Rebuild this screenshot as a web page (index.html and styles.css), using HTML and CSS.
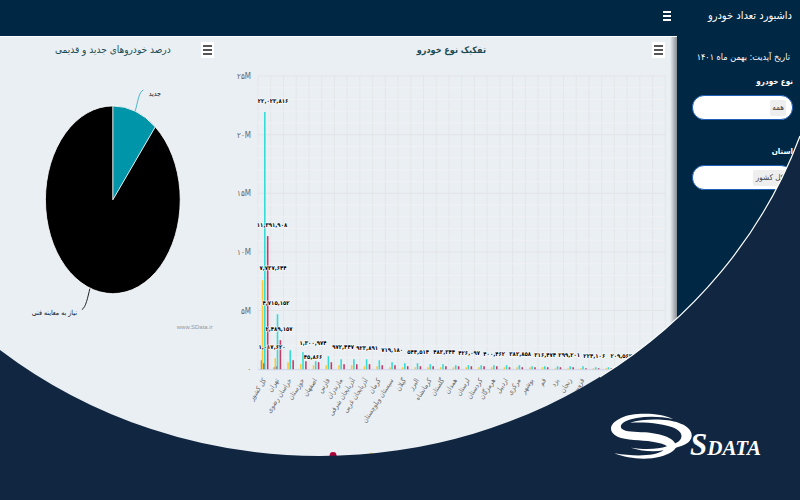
FILE: index.html
```html
<!DOCTYPE html>
<html lang="fa">
<head>
<meta charset="utf-8">
<meta name="viewport" content="width=device-width, initial-scale=1">
<title>داشبورد تعداد خودرو</title>
<link rel="stylesheet" href="styles.css">
</head>
<body>
<div class="page">
  <header class="topbar">
    <button class="nav-toggle" type="button" aria-label="منو">
      <svg viewBox="0 0 8 10" width="8" height="10"><path d="M0 1h8M0 5h8M0 9h8" stroke="#fff" stroke-width="2"/></svg>
    </button>
    <h1 class="brand" dir="rtl">داشبورد تعداد خودرو</h1>
  </header>

  <div class="body">
    <main class="charts">
      <section class="panel">
        <div class="panel-head">
          <h2 class="panel-title" dir="rtl">درصد خودروهای جدید و قدیمی</h2>
          <button class="chart-menu" type="button" aria-label="منوی نمودار">
            <svg viewBox="0 0 9 10" width="9" height="10"><path d="M0 1h9M0 5h9M0 9h9" stroke="#555" stroke-width="2"/></svg>
          </button>
        </div>
        <svg class="chart" viewBox="0 62 226 398" role="img" aria-label="جدید و نیاز به معاینه فنی">
          <ellipse cx="113" cy="200" rx="67.5" ry="94" fill="#000" stroke="#fff" stroke-width=".8"/>
          <path d="M113 200V106A67.5 94 0 0 1 155.5 127Z" fill="#0095a8" stroke="#e8f0f2" stroke-width="1"/>
          <path d="M135.5 111C138 102 139 92 143.500 90" fill="none" stroke="#4bb5c6"/>
          <path d="M90 289C88 297 86 308 82 310" fill="none" stroke="#222"/>
          <text class="slice-label" x="149" y="96">جدید</text>
          <text class="slice-label" x="77" y="315" text-anchor="end">نیاز به معاینه فنی</text>
          <text class="credit" x="213" y="329" text-anchor="end">www.SData.ir</text>
        </svg>
      </section>

      <section class="panel">
        <div class="panel-head">
          <h2 class="panel-title strong" dir="rtl">تفکیک نوع خودرو</h2>
          <button class="chart-menu" type="button" aria-label="منوی نمودار">
            <svg viewBox="0 0 9 10" width="9" height="10"><path d="M0 1h9M0 5h9M0 9h9" stroke="#555" stroke-width="2"/></svg>
          </button>
        </div>
        <svg class="chart" id="bars" viewBox="226 62 451 398" role="img" aria-label="تفکیک نوع خودرو"></svg>
      </section>
    </main>

    <aside class="sidebar" dir="rtl">
      <p class="updated">تاریخ آپدیت: بهمن ماه ۱۴۰۱</p>
      <div class="field">
        <label for="type">نوع خودرو</label>
        <div class="pill"><select id="type"><option>همه</option></select></div>
      </div>
      <div class="field">
        <label for="province">استان</label>
        <div class="pill"><select id="province"><option>کل کشور</option></select></div>
      </div>
    </aside>
  </div>

  <svg class="curve" viewBox="0 0 800 500" preserveAspectRatio="none" aria-hidden="true">
    <path d="M0 500V350A509 479 0 0 0 320 456A509 479 0 0 0 800 136V500Z" fill="#112741"/>
    <path d="M600 377A509 479 0 0 0 800 136" fill="none" stroke="#fff" stroke-width="1.200"/>
  </svg>

  <svg class="logo" viewBox="608 408 160 56" role="img" aria-label="SData">
    <g fill="#fff" transform="translate(605 408) scale(.3333)">
      <path d="M204 33C165 14 85 12 48 30C12 46 8 72 38 86C62 97 108 95 142 101C165 105 182 109 186 115C160 124 120 126 78 119C110 130 148 132 176 127C150 145 90 146 28 136C70 154 130 156 165 146C195 138 208 128 214 117C211 90 172 78 120 73C90 71 62 72 50 62C40 50 60 36 95 30C130 24 170 26 204 33Z"/>
      <path d="M75 44C115 32 185 31 222 45C262 58 272 88 246 106C236 113 224 116 208 121L206 108C236 98 238 74 208 60C178 46 120 41 75 44Z"/>
    </g>
    <text class="logo-text" x="690" y="455">S<tspan class="logo-small">DATA</tspan></text>
  </svg>
</div>
<script src="chart.js"></script>
</body>
</html>
```
FILE: styles.css
```css
* { box-sizing: border-box; }

body {
  margin: 0;
  font-family: "DejaVu Sans Condensed", "DejaVu Sans", sans-serif;
  background: #112741;
}

h1, h2, p { margin: 0; font-weight: 400; }
button { border: 0; padding: 0; cursor: pointer; }
button svg { display: block; }

.page {
  position: relative;
  display: flex;
  flex-direction: column;
  height: 100vh;
  overflow: hidden;
}

.topbar {
  flex: none;
  display: flex;
  align-items: center;
  justify-content: flex-end;
  gap: 37px;
  height: 36px;
  padding: 0 8px 4px;
  background: #002744;
}

.nav-toggle { background: none; }

.brand {
  color: #fff;
  font-size: 11px;
  line-height: 16px;
  white-space: nowrap;
}

.body {
  flex: 1;
  display: grid;
  grid-template-columns: minmax(0, 1fr) 123px;
}

.charts {
  display: grid;
  grid-template-columns: minmax(0, 1fr) minmax(0, 2fr);
  align-items: start;
  border-top: 1px solid #fff;
  background: linear-gradient(to left, #878d92, #eaeff4 7px);
}

.panel-head {
  display: grid;
  grid-template-columns: 1fr auto 1fr;
  align-items: center;
  height: 25px;
  padding: 0 12px;
}

.panel-title {
  grid-column: 2;
  color: #1d4b50;
  font-size: 10px;
  line-height: 16px;
  white-space: nowrap;
}

.panel-title.strong { font-weight: 700; font-size: 9px; }

.chart-menu {
  justify-self: end;
  padding: 3px 2px;
  background: #fff;
}

.chart { display: block; width: 100%; height: auto; }

.slice-label { font-size: 7px; fill: #111; }
.credit { font: 6px "Liberation Sans", sans-serif; fill: #999; }
.axis-label { font-size: 7px; fill: #666; }
.tick-label { font-size: 8px; fill: #666; }
.value-label {
  font-size: 6px;
  font-weight: 700;
  fill: #000;
  stroke: #fff;
  stroke-width: 1px;
  paint-order: stroke;
}

.sidebar {
  padding: 13px 7px 13px 15px;
  background: #002744;
  color: #fff;
}

.updated {
  margin-bottom: 9px;
  padding-right: 3px;
  font-size: 9px;
  line-height: 16px;
  white-space: nowrap;
}

.field { margin-bottom: 24px; }

.field label {
  display: block;
  margin-bottom: 5px;
  font-size: 8px;
  font-weight: 700;
  line-height: 16px;
}

.pill {
  display: flex;
  align-items: center;
  height: 25px;
  padding: 0 6px;
  border: 1px solid #1e5fb8;
  border-radius: 12px;
  background: #fff;
}

.pill select {
  appearance: none;
  height: 16px;
  padding: 0 2px;
  border: 0;
  border-radius: 2px;
  background: #eee;
  color: #444;
  font: 8px "DejaVu Sans Condensed", "DejaVu Sans", sans-serif;
}

.curve {
  position: absolute;
  inset: 0;
  width: 100%;
  height: 100%;
  pointer-events: none;
}

.logo {
  position: absolute;
  right: 32px;
  bottom: 36px;
  width: 160px;
  height: 56px;
}

.logo-text {
  font: italic 700 31px "Liberation Serif", serif;
  fill: #fff;
}

.logo-small { font-size: 21px; }
```
FILE: chart.js
```js
const svg = document.getElementById("bars");
const LEFT = 258, RIGHT = 665, TOP = 76, BASE = 369, COUNT = 32;
const STEP = (RIGHT - LEFT) / COUNT;

function add(name, attrs, text) {
  const node = document.createElementNS("http://www.w3.org/2000/svg", name);
  for (const key in attrs) node.setAttribute(key, attrs[key]);
  if (text) node.textContent = text;
  svg.appendChild(node);
}

// Grid: five major bands, each split in five
for (let i = 0; i <= COUNT; i++) {
  const x = LEFT + i * STEP;
  add("path", { d: `M${x} ${TOP}V${BASE}`, stroke: "#e4e6e9", "stroke-width": 1 });
}
for (let i = 0; i <= 25; i++) {
  const y = TOP + i * (BASE - TOP) / 25;
  add("path", { d: `M${LEFT} ${y}H${RIGHT}`, stroke: i % 5 ? "#eff1f3" : "#e2e4e6", "stroke-width": 1 });
}
add("path", { d: `M${LEFT} ${BASE + 0.5}H${RIGHT}`, stroke: "#ccd6eb", "stroke-width": 1 });

["۲۵M", "۲۰M", "۱۵M", "۱۰M", "۵M", "۰"].forEach((t, i) => {
  add("text", { class: "tick-label", x: 251, y: TOP + 3 + i * (BASE - TOP) / 5, "text-anchor": "end" }, t);
});

// Bar heights per province: yellow, cyan, red
const heights = [
  [89, 257, 133], [11, 55, 29], [7, 19, 9], [5, 17, 8], [4, 8, 7], [4, 13, 7],
  [4, 10, 5], [4, 10, 5], [3, 10, 5], [3, 9, 4], [2, 7, 4], [2, 6, 3], [2, 6, 3],
  [2, 5, 3], [2, 5, 3], [2, 4, 3], [2, 4, 3], [2, 4, 3], [2, 4, 3], [2, 4, 2],
  [2, 4, 2], [2, 3, 2], [2, 3, 2], [1, 3, 2], [1, 3, 2], [1, 3, 1], [1, 2, 1], [1, 2, 1]
];
const colors = ["#ffc83a", "#36dcd3", "#c63a67"];
function bar(x, h, fill, w = 1.6) {
  add("rect", { x, y: BASE - h, width: w, height: h, fill });
}
bar(260.7, 9, "#a58a83");
bar(273.5, 2, "#a58a83");
heights.forEach((row, i) => {
  const mid = LEFT + (i + 0.5) * STEP;
  bar(mid - 2.6, row[0], colors[0]);
  bar(mid - 0.4, row[1], colors[1]);
  bar(mid + 2.5, row[2], colors[2]);
});
bar(263, 6, "#6c8c99");
bar(275.7, 3, "#8a91a5");

const provinces = ["کل کشور", "تهران", "خراسان رضوی", "خوزستان", "اصفهان", "فارس", "مازندران",
  "آذربایجان شرقی", "آذربایجان غربی", "کرمان", "سیستان وبلوچستان", "گیلان", "البرز", "کرمانشاه",
  "گلستان", "همدان", "لرستان", "کردستان", "هرمزگان", "اردبیل", "مرکزی", "بوشهر", "قم", "یزد",
  "زنجان", "قزوین"];
provinces.forEach((name, i) => {
  const x = LEFT + (i + 0.5) * STEP + 2;
  add("text", { class: "axis-label", "text-anchor": "end", transform: `translate(${x} 380) rotate(-57)` }, name);
});

const values = [
  ["۲۲,۰۲۳,۸۱۶", 273, 101], ["۱۱,۳۹۱,۹۰۸", 272, 225], ["۷,۷۳۷,۶۴۴", 273, 268],
  ["۴,۷۱۵,۱۵۲", 276, 303], ["۲,۴۸۹,۱۵۷", 279, 329], ["۱,۰۱۷,۶۲۰", 272, 347],
  ["۱,۳۰۰,۹۷۴", 313, 343], ["۴۵,۸۶۶", 313, 357], ["۹۷۲,۴۴۷", 343, 347],
  ["۹۲۳,۸۹۱", 367, 348], ["۷۱۹,۱۸۰", 392, 350], ["۵۴۴,۵۱۴", 418, 352],
  ["۴۸۳,۳۴۴", 444, 352], ["۴۲۶,۰۹۷", 469, 353], ["۴۰۰,۴۶۲", 494, 354],
  ["۳۸۲,۸۵۸", 520, 354], ["۳۱۶,۴۷۴", 545, 355], ["۲۹۹,۲۰۱", 569, 355],
  ["۲۲۴,۱۰۶", 594, 356], ["۲۰۹,۵۶۲", 621, 356]
];
values.forEach(([t, x, y]) => add("text", { class: "value-label", x, y: y + 2, "text-anchor": "middle" }, t));

// Legend markers along the lower edge
add("circle", { cx: 333, cy: 455, r: 3.4, fill: "#b0003a" });
add("circle", { cx: 371, cy: 455, r: 2.5, fill: "#ffc83a" });
```
